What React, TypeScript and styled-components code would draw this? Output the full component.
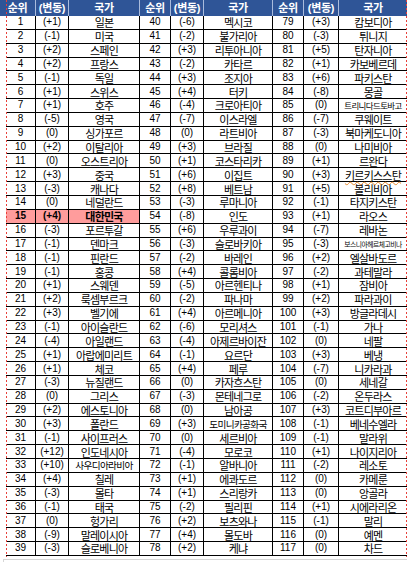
import React from "react";
import styled, { createGlobalStyle } from "styled-components";

const GlobalStyle = createGlobalStyle`
  html, body {
    margin: 0;
    padding: 0;
    background: #ffffff;
  }
  body {
    font-family: "Liberation Sans", "Noto Sans CJK KR", sans-serif;
    color: #000000;
  }
`;

// column widths of the sheet body (3 groups of 순위 / (변동) / 국가)
const COLS = "30px 33px 71px 31px 33px 69px 31px 35px 68px";
const HEAD_COLS = "36px 33px 71px 31px 33px 69px 31px 35px 68px";

type Entry = [string, string];

const group1: Entry[] = [
  ["(+1)", "일본"], ["(-1)", "미국"], ["(+2)", "스페인"], ["(+2)", "프랑스"],
  ["(-1)", "독일"], ["(+1)", "스위스"], ["(+1)", "호주"], ["(-5)", "영국"],
  ["(0)", "싱가포르"], ["(+2)", "이탈리아"], ["(0)", "오스트리아"], ["(+3)", "중국"],
  ["(-3)", "캐나다"], ["(0)", "네덜란드"], ["(+4)", "대한민국"], ["(-3)", "포르투갈"],
  ["(-1)", "덴마크"], ["(-1)", "핀란드"], ["(-1)", "홍콩"], ["(+1)", "스웨덴"],
  ["(+2)", "룩셈부르크"], ["(+3)", "벨기에"], ["(-1)", "아이슬란드"], ["(-4)", "아일랜드"],
  ["(+1)", "아랍에미리트"], ["(+1)", "체코"], ["(-3)", "뉴질랜드"], ["(0)", "그리스"],
  ["(+2)", "에스토니아"], ["(+3)", "폴란드"], ["(-1)", "사이프러스"], ["(+12)", "인도네시아"],
  ["(+10)", "사우디아라비아"], ["(+4)", "칠레"], ["(-3)", "몰타"], ["(-1)", "태국"],
  ["(0)", "헝가리"], ["(-9)", "말레이시아"], ["(-3)", "슬로베니아"],
];

const group2: Entry[] = [
  ["(-6)", "멕시코"], ["(-2)", "불가리아"], ["(+3)", "리투아니아"], ["(-2)", "카타르"],
  ["(+3)", "조지아"], ["(+4)", "터키"], ["(-4)", "크로아티아"], ["(-7)", "이스라엘"],
  ["(0)", "라트비아"], ["(+3)", "브라질"], ["(+1)", "코스타리카"], ["(+6)", "이집트"],
  ["(+8)", "베트남"], ["(-3)", "루마니아"], ["(-8)", "인도"], ["(+6)", "우루과이"],
  ["(-3)", "슬로바키아"], ["(-2)", "바레인"], ["(+4)", "콜롬비아"], ["(-5)", "아르헨티나"],
  ["(-2)", "파나마"], ["(+4)", "아르메니아"], ["(-6)", "모리셔스"], ["(-4)", "아제르바이잔"],
  ["(-1)", "요르단"], ["(+4)", "페루"], ["(0)", "카자흐스탄"], ["(-3)", "몬테네그로"],
  ["(0)", "남아공"], ["(+3)", "도미니카공화국"], ["(0)", "세르비아"], ["(-4)", "모로코"],
  ["(-1)", "알바니아"], ["(+1)", "에콰도르"], ["(+1)", "스리랑카"], ["(-2)", "필리핀"],
  ["(+2)", "보츠와나"], ["(+4)", "몰도바"], ["(+2)", "케냐"],
];

const group3: Entry[] = [
  ["(+3)", "캄보디아"], ["(-3)", "튀니지"], ["(+5)", "탄자니아"], ["(+1)", "카보베르데"],
  ["(+6)", "파키스탄"], ["(-8)", "몽골"], ["(0)", "트리니다드토바고"], ["(-7)", "쿠웨이트"],
  ["(-3)", "북마케도니아"], ["(0)", "나미비아"], ["(+1)", "르완다"], ["(+3)", "키르키스스탄"],
  ["(+5)", "볼리비아"], ["(-1)", "타지키스탄"], ["(+1)", "라오스"], ["(-7)", "레바논"],
  ["(-3)", "보스니아헤르체고비나"], ["(+2)", "엘살바도르"], ["(-2)", "과테말라"], ["(+1)", "잠비아"],
  ["(+2)", "파라과이"], ["(+3)", "방글라데시"], ["(-1)", "가나"], ["(0)", "네팔"],
  ["(+3)", "베냉"], ["(-7)", "니카라과"], ["(0)", "세네갈"], ["(-2)", "온두라스"],
  ["(+3)", "코트디부아르"], ["(-1)", "베네수엘라"], ["(-1)", "말라위"], ["(+1)", "나이지리아"],
  ["(-2)", "레소토"], ["(0)", "카메룬"], ["(0)", "앙골라"], ["(+1)", "시에라리온"],
  ["(-1)", "말리"], ["(0)", "예멘"], ["(0)", "차드"],
];

const groups = [
  { start: 1, list: group1 },
  { start: 40, list: group2 },
  { start: 79, list: group3 },
];

// excel "shrink to fit": long names get a smaller font
function nameSize(name: string) {
  if (name.length <= 6) return 11;
  return 63 / (0.93 * name.length);
}

function App() {
  return (
    <>
      <GlobalStyle />
      <Sheet>
        <Header>
          {groups.map((g, gi) => (
            <React.Fragment key={gi}>
              <HeadCell>순위</HeadCell>
              <HeadCell>(변동)</HeadCell>
              <HeadCell $last={gi === 2}>국가</HeadCell>
            </React.Fragment>
          ))}
        </Header>
        {group1.map((_, i) => (
          <Row key={i}>
            {groups.map((g, gi) => {
              const [change, name] = g.list[i];
              const hl = g.start + i === 15;
              return (
                <React.Fragment key={gi}>
                  <NumCell $hl={hl}>{g.start + i}</NumCell>
                  <NumCell $hl={hl}>{change}</NumCell>
                  <NameCell $hl={hl} $last={gi === 2}>
                    <Name $size={nameSize(name)} $squiggle={name === "키르키스스탄"}>
                      {name}
                    </Name>
                  </NameCell>
                </React.Fragment>
              );
            })}
          </Row>
        ))}
        <SheetEdge />
      </Sheet>
    </>
  );
}

export default App;

const Sheet = styled.div`
  position: relative;
  width: 401px;
  margin-left: 6px;

  /* red dotted print-area lines */
  &::before,
  &::after {
    content: "";
    position: absolute;
    top: 0;
    height: 557px;
    width: 1px;
    background: repeating-linear-gradient(to bottom, #e8403a 0 2px, transparent 2px 4px);
    pointer-events: none;
  }
  &::before {
    left: 0;
  }
  &::after {
    left: 400px;
  }
`;

const Header = styled.div`
  display: grid;
  grid-template-columns: ${HEAD_COLS};
  height: 16px;
  margin-left: -6px;
  background-color: #2f5597;
`;

const HeadCell = styled.div<{ $last?: boolean }>`
  display: flex;
  align-items: center;
  justify-content: center;
  box-sizing: border-box;
  border-right: ${(p) => (p.$last ? "none" : "1px solid #a9bbdc")};
  color: #ffffff;
  font-family: "Liberation Sans", "Noto Sans CJK KR", sans-serif;
  font-weight: 700;
  font-size: 11px;
  line-height: 12px;
  letter-spacing: -0.3px;
  white-space: nowrap;
`;

const Row = styled.div`
  display: grid;
  grid-template-columns: ${COLS};
  height: 13.85px;
`;

const Cell = styled.div<{ $hl?: boolean; $last?: boolean }>`
  display: flex;
  align-items: center;
  justify-content: center;
  box-sizing: border-box;
  white-space: nowrap;
  border-bottom: 1px solid #000000;
  border-right: ${(p) => (p.$last ? "none" : "1px solid #000000")};
  background-color: ${(p) => (p.$hl ? "#ff9c9c" : "transparent")};
  font-weight: ${(p) => (p.$hl ? 700 : 400)};
  color: #000000;
`;

const NumCell = styled(Cell)`
  font-family: "Liberation Sans", Arial, sans-serif;
  font-size: 10px;
  line-height: 12px;
`;

const NameCell = styled(Cell)`
  font-family: "Noto Sans CJK KR", sans-serif;
  line-height: 12px;
`;

const Name = styled.span<{ $size: number; $squiggle?: boolean }>`
  display: block;
  font-size: ${(p) => p.$size}px;
  line-height: 12px;
  letter-spacing: -0.07em;
  text-decoration: ${(p) => (p.$squiggle ? "underline wavy #e8892b" : "none")};
  text-decoration-thickness: 1px;
  text-underline-offset: 1px;
`;

const SheetEdge = styled.div`
  height: 5px;
  margin-top: 3px;
  margin-left: -3px;
  border-top: 1px solid #d6d6d6;
  border-left: 1px solid #d6d6d6;
`;
